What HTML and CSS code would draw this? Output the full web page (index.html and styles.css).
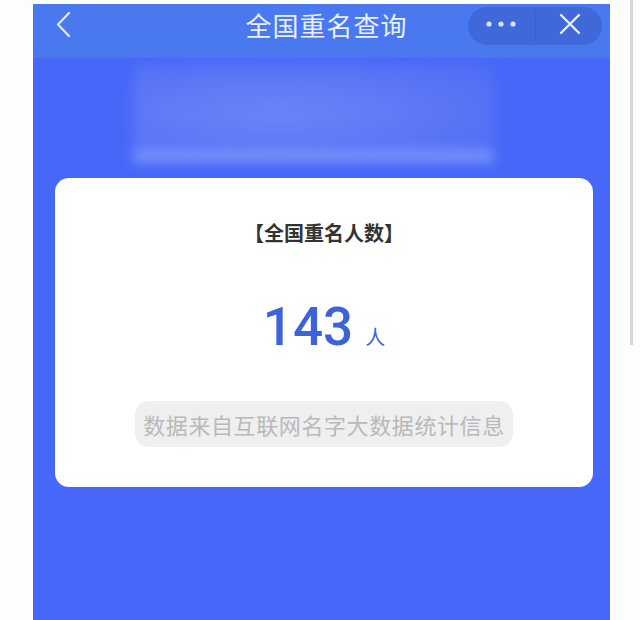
FILE: index.html
```html
<!DOCTYPE html>
<html lang="zh-CN">
<head>
    <meta charset="UTF-8">
    <meta name="viewport" content="width=device-width, initial-scale=1.0">
    <title>全国重名查询</title>
    <link rel="stylesheet" href="styles.css">
</head>
<body>
<div class="page">
    <div class="phone">
        <!-- 顶部导航 -->
        <div class="nav-bar">
            <div class="nav-back">
                <svg width="16" height="26" viewBox="0 0 16 26">
                    <polyline points="14,2 3,13.5 14,25" fill="none" stroke="#dfe8ff" stroke-width="2.2" stroke-linecap="round" stroke-linejoin="round"/>
                </svg>
            </div>
            <div class="nav-title">全国重名查询</div>
            <div class="capsule">
                <div class="capsule-btn">
                    <svg width="30" height="6" viewBox="0 0 30 6">
                        <circle cx="3" cy="3" r="2.6" fill="#d6e2ff"/>
                        <circle cx="15" cy="3" r="2.6" fill="#d6e2ff"/>
                        <circle cx="27" cy="3" r="2.6" fill="#d6e2ff"/>
                    </svg>
                </div>
                <div class="capsule-line"></div>
                <div class="capsule-btn">
                    <svg width="22" height="22" viewBox="0 0 22 22">
                        <path d="M2 2 L20 20 M20 2 L2 20" fill="none" stroke="#e6eeff" stroke-width="2.4" stroke-linecap="round"/>
                    </svg>
                </div>
            </div>
        </div>

        <!-- 模糊的头图 -->
        <div class="hero">
            <div class="hero-blur"></div>
        </div>

        <!-- 结果卡片 -->
        <div class="result-card">
            <div class="result-label">【全国重名人数】</div>
            <div class="result-count">
                <span class="count-num">143</span>
                <span class="count-unit">人</span>
            </div>
            <div class="result-note">数据来自互联网名字大数据统计信息</div>
        </div>
    </div>
    <div class="scroll-line"></div>
</div>
</body>
</html>
```

FILE: styles.css
```css
body {
    margin: 0;
    background-color: #fdfdfd;
    font-family: "Noto Sans CJK SC", "Noto Sans", sans-serif;
}
.page {
    display: flex;
    align-items: flex-start;
    height: 620px;
    overflow: hidden;
}
.phone {
    width: 577px;
    height: 616px;
    margin: 4px 0 0 33px;
    background-color: #4767f8;
}
.scroll-line {
    width: 3px;
    height: 345px;
    margin-left: 20px;
    background-color: #d6d6d6;
}

/* nav */
.nav-bar {
    display: grid;
    grid-template-columns: 1fr auto 1fr;
    align-items: center;
    height: 54px;
    padding: 1px 8px 0 22px;
    box-sizing: border-box;
    align-content: start;
    background-color: #4a79ef;
}
.nav-bar > * {
    height: 38px;
    display: flex;
    align-items: center;
}
.nav-back {
    padding-bottom: 4px;
}
.nav-title {
    color: #e9efff;
    font-size: 26px;
    letter-spacing: 1px;
    padding-bottom: 4px;
    padding-right: 4px;
}
.capsule {
    justify-self: end;
    width: 134px;
    border-radius: 19px;
    background-color: #3f68d9;
}
.capsule-btn {
    flex: 1;
    display: flex;
    justify-content: center;
    align-items: center;
    height: 100%;
}
.capsule-btn:last-child svg {
    margin-bottom: 4px;
    margin-left: 2px;
}
.capsule-btn:first-child svg {
    margin-bottom: 4px;
}
.capsule-line {
    width: 1px;
    height: 30px;
    background-color: #3a60cc;
}

/* hero */
.hero {
    height: 120px;
    overflow: hidden;
}
.hero-blur {
    width: 361px;
    height: 100px;
    margin: 5px 0 0 100px;
    background:
        linear-gradient(to bottom, rgba(0, 0, 0, 0) 86%, #7590f8 87%, #7590f8 100%),
        radial-gradient(ellipse at 40% 50%, #6a85f6 0%, #5d79f6 45%, #4c6bf7 100%);
    filter: blur(6px);
}

/* card */
.result-card {
    margin: 0 17px 0 22px;
    height: 309px;
    box-sizing: border-box;
    padding-top: 42px;
    background-color: #fff;
    border-radius: 14px;
    display: flex;
    flex-direction: column;
    align-items: center;
}
.result-label {
    font-size: 20px;
    font-weight: bold;
    color: #333;
    line-height: 26px;
}
.result-count {
    margin-top: 51px;
    display: flex;
    align-items: baseline;
    color: #3d63d9;
    line-height: 60px;
}
.count-num {
    font-family: Roboto, "Noto Sans", sans-serif;
    font-size: 53px;
    font-weight: 500;
}
.count-unit {
    font-size: 20px;
    margin-left: 12px;
}
.result-note {
    margin-top: 34px;
    height: 46px;
    line-height: 46px;
    padding: 0 8px;
    border-radius: 14px;
    background-color: #efefef;
    color: #b9b9b9;
    font-size: 22px;
    letter-spacing: 0.6px;
}
```
